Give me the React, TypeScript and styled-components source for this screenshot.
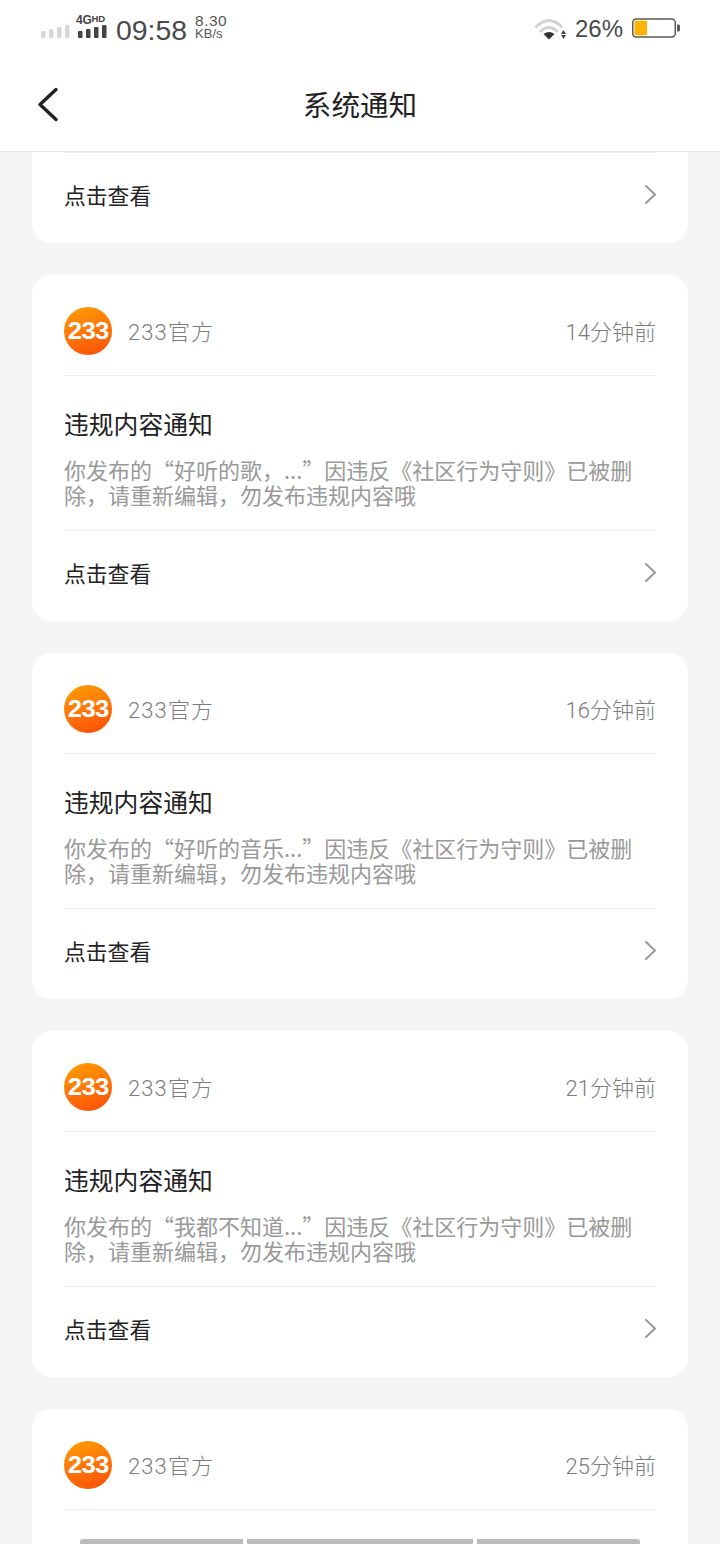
import React from "react";
import styled, { createGlobalStyle } from "styled-components";

const LATIN = `"Liberation Sans", "Noto Sans CJK SC", sans-serif`;
const CJK = `"Noto Sans CJK SC", "Liberation Sans", sans-serif`;
const THIN = `Roboto, "Noto Sans CJK SC", sans-serif`;

const GlobalStyle = createGlobalStyle`
  html, body {
    margin: 0;
    padding: 0;
    background: #f5f5f5;
  }
`;

const Page = styled.div`
  position: relative;
  width: 720px;
  height: 1544px;
  overflow: hidden;
  background: #f5f5f5;
  font-family: ${CJK};
  display: flex;
  flex-direction: column;
`;

const TopArea = styled.header`
  background: #fff;
  height: 152px;
  flex: none;
  display: flex;
  flex-direction: column;
  box-sizing: border-box;
  border-bottom: 1px solid #e4e4e4;
`;

const StatusBar = styled.div`
  height: 60px;
  flex: none;
  display: flex;
  align-items: center;
  padding: 0 40px 0 41px;
  font-family: ${LATIN};
  color: #444;
`;

const SignalGroup = styled.div`
  display: flex;
  align-items: flex-end;
  gap: 7px;
  height: 28px;
  margin-top: -12px;
`;

const NetStack = styled.div`
  position: relative;
  width: 31px;
  height: 28px;
  display: flex;
  align-items: flex-end;
  padding-left: 1px;
`;

const NetLabel = styled.span`
  position: absolute;
  left: -1px;
  top: 3px;
  font-size: 12px;
  font-weight: 700;
  letter-spacing: -0.2px;
  line-height: 12px;
  white-space: nowrap;
  color: #444;
  small {
    font-size: 9.5px;
    vertical-align: 2px;
  }
`;

const Clock = styled.span`
  font-size: 28.4px;
  line-height: 32px;
  margin-left: 7px;
  color: #4a4a4a;
`;

const Speed = styled.div`
  margin-left: 8px;
  margin-top: -6px;
  display: flex;
  flex-direction: column;
  color: #555;
  span:first-child {
    font-size: 15.5px;
    line-height: 13px;
    letter-spacing: 0.5px;
  }
  span:last-child {
    font-size: 13px;
    line-height: 13px;
  }
`;

const Spacer = styled.div`
  flex: 1;
`;

const WifiIcon = styled.svg`
  margin-top: -3px;
`;

const Percent = styled.span`
  font-size: 24px;
  margin-left: 9px;
  margin-top: -2px;
  color: #4a4a4a;
`;

const BatteryWrap = styled.div`
  margin-left: 9px;
  margin-top: -5px;
  display: flex;
  align-items: center;
`;

const NavBar = styled.div`
  flex: 1;
  position: relative;
  display: flex;
  align-items: center;
  justify-content: center;
  padding-bottom: 5px;
`;

const NavTitle = styled.h1`
  margin: 0;
  font-size: 28.6px;
  font-weight: 400;
  color: #222;
`;

const BackButton = styled.button`
  position: absolute;
  left: 36px;
  top: 26px;
  padding: 0;
  border: 0;
  background: none;
  display: flex;
`;

const List = styled.main`
  display: flex;
  flex-direction: column;
  gap: 32px;
  padding: 0 32px;
`;

const Card = styled.section<{ $clipped?: boolean }>`
  flex: none;
  background: #fff;
  border-radius: ${(p) => (p.$clipped ? "0 0 20px 20px" : "20px")};
  padding: 0 32px;
`;

const TailCard = styled(Card)`
  height: 346px;
  box-sizing: border-box;
`;

const CardHeader = styled.div`
  height: 101px;
  box-sizing: border-box;
  padding-top: 12px;
  display: flex;
  align-items: center;
  border-bottom: 1px solid #ececec;
`;

const Logo = styled.div`
  width: 48px;
  height: 48px;
  border-radius: 50%;
  background: linear-gradient(160deg, #ffa000 0%, #ff7a0a 45%, #fb4c06 100%);
  display: flex;
  align-items: center;
  justify-content: center;
  font-family: ${LATIN};
  color: #fff;
  font-size: 23px;
  line-height: 1;
  font-weight: 700;
  letter-spacing: -0.6px;
  span {
    display: block;
    transform: scaleX(1.12);
  }
`;

const Sender = styled.span`
  margin-left: 16px;
  margin-top: -2px;
  font-family: ${THIN};
  font-weight: 300;
  font-size: 22px;
  letter-spacing: 1.1px;
  color: #7c7c7c;
`;

const TimeAgo = styled.span`
  margin-left: auto;
  margin-top: -2px;
  font-family: ${THIN};
  font-weight: 300;
  font-size: 22px;
  color: #7c7c7c;
`;

const Title = styled.h2`
  margin: 0;
  padding-top: 30px;
  font-size: 24.8px;
  line-height: 34px;
  font-weight: 400;
  color: #222;
`;

const Body = styled.p`
  margin: 17px 0 0;
  padding-bottom: 23px;
  font-size: 22px;
  line-height: 25px;
  color: #999;
  border-bottom: 1px solid #ececec;
`;

const ActionRow = styled.div`
  height: 90px;
  box-sizing: border-box;
  padding-bottom: 7px;
  display: flex;
  align-items: center;
  justify-content: space-between;
  font-size: 21.8px;
  color: #222;
`;

const NavIndicator = styled.div`
  position: absolute;
  left: 80px;
  bottom: 0;
  width: 560px;
  height: 5px;
  display: flex;
  gap: 4px;
`;

const IndicatorPiece = styled.div<{ $w: number; $pos: "l" | "m" | "r" }>`
  width: ${(p) => p.$w}px;
  background: #bbb;
  border-radius: ${(p) => (p.$pos === "l" ? "3px 0 0 0" : p.$pos === "r" ? "0 3px 0 0" : "0")};
`;

const ClippedTop = styled.div`
  height: 0;
  border-top: 1px solid #ececec;
`;

const Bars = ({ color }: { color: string }) => (
  <svg width="29" height="13" viewBox="0 0 29 13">
    <rect x="0" y="6" width="4.5" height="7" rx="1" fill={color} />
    <rect x="8" y="4" width="4.5" height="9" rx="1" fill={color} />
    <rect x="16" y="2" width="4.5" height="11" rx="1" fill={color} />
    <rect x="24" y="0" width="4.5" height="13" rx="1" fill={color} />
  </svg>
);

const Wifi = () => (
  <WifiIcon width="32" height="23" viewBox="0 0 32 23" fill="none">
    <path d="M1.5 10.5Q15 -3.5 28.5 10.5" stroke="#d2d2d2" strokeWidth="3" />
    <path d="M6 15Q15 6 24 15" stroke="#d2d2d2" strokeWidth="3" />
    <path d="M9.5 17Q15 13 20.5 17L15 22.5Z" fill="#333" />
    <path d="M29.5 13L32 17H27Z M27 18H32L29.5 22Z" fill="#444" />
  </WifiIcon>
);

const Battery = () => (
  <svg width="48" height="20" viewBox="0 0 48 20" fill="none">
    <rect x="0.75" y="1" width="42.5" height="18" rx="3.5" stroke="#5a5a5a" strokeWidth="1.5" />
    <rect x="2.5" y="2.8" width="12.5" height="14.4" rx="1" fill="#fdb300" />
    <path d="M45 6.5h1.5a1.5 1.5 0 0 1 1.5 1.5v4a1.5 1.5 0 0 1-1.5 1.5H45Z" fill="#5a5a5a" />
  </svg>
);

const BackIcon = () => (
  <svg width="24" height="36" viewBox="0 0 24 36" fill="none">
    <path d="M20 3.5L4 18.5L20 33.5" stroke="#222" strokeWidth="3.4" strokeLinecap="round" strokeLinejoin="round" />
  </svg>
);

const ChevronIcon = () => (
  <svg width="11" height="19" viewBox="0 0 11 19" fill="none">
    <path d="M1 1L10 9.5L1 18" stroke="#999" strokeWidth="2" strokeLinecap="round" strokeLinejoin="round" />
  </svg>
);

const Action = () => (
  <ActionRow>
    点击查看
    <ChevronIcon />
  </ActionRow>
);

const Header = ({ time }: { time: string }) => (
  <CardHeader>
    <Logo>
      <span>233</span>
    </Logo>
    <Sender>233官方</Sender>
    <TimeAgo>{time}</TimeAgo>
  </CardHeader>
);

const notices = [
  { time: "14分钟前", post: "好听的歌，..." },
  { time: "16分钟前", post: "好听的音乐..." },
  { time: "21分钟前", post: "我都不知道..." },
];

export default function App() {
  return (
    <Page>
      <GlobalStyle />
      <TopArea>
        <StatusBar>
          <SignalGroup>
            <Bars color="#d8d8d8" />
            <NetStack>
              <NetLabel>
                4G<small>HD</small>
              </NetLabel>
              <Bars color="#444" />
            </NetStack>
          </SignalGroup>
          <Clock>09:58</Clock>
          <Speed>
            <span>8.30</span>
            <span>KB/s</span>
          </Speed>
          <Spacer />
          <Wifi />
          <Percent>26%</Percent>
          <BatteryWrap>
            <Battery />
          </BatteryWrap>
        </StatusBar>
        <NavBar>
          <BackButton>
            <BackIcon />
          </BackButton>
          <NavTitle>系统通知</NavTitle>
        </NavBar>
      </TopArea>
      <List>
        <Card $clipped>
          <ClippedTop />
          <Action />
        </Card>
        {notices.map((n) => (
          <Card key={n.time}>
            <Header time={n.time} />
            <Title>违规内容通知</Title>
            <Body>{`你发布的“${n.post}”因违反《社区行为守则》已被删除，请重新编辑，勿发布违规内容哦`}</Body>
            <Action />
          </Card>
        ))}
        <TailCard>
          <Header time="25分钟前" />
        </TailCard>
      </List>
      <NavIndicator>
        <IndicatorPiece $w={163} $pos="l" />
        <IndicatorPiece $w={226} $pos="m" />
        <IndicatorPiece $w={163} $pos="r" />
      </NavIndicator>
    </Page>
  );
}
